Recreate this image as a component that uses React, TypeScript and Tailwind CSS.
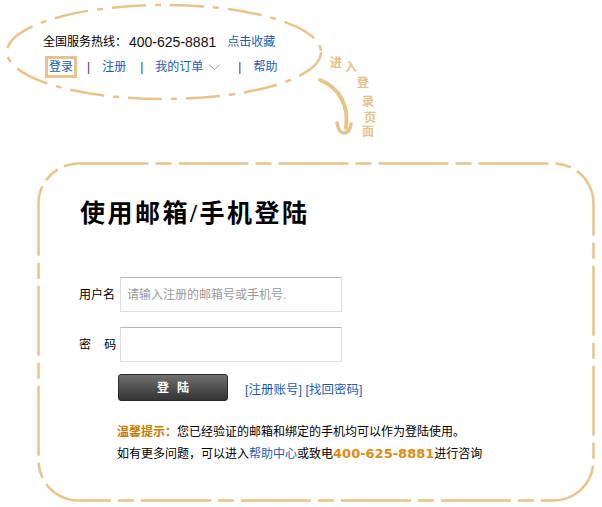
import React from 'react';

const GOLD = '#e8c48c';

function HeaderOval() {
  return (
    <header className="relative h-[110px]">
      {/* dashed oval sketch around the header links */}
      <svg className="absolute left-0 top-0" width="340" height="110" viewBox="0 0 340 110">
        <ellipse
          cx="164"
          cy="52"
          rx="157"
          ry="47"
          fill="none"
          stroke={GOLD}
          strokeWidth="2.5"
          strokeDasharray="34 9 6 9"
        />
      </svg>
      <div className="relative pl-[43px] pt-[33px] text-[12px] leading-[18px]">
        <div className="flex items-center">
          <span className="text-black">全国服务热线：</span>
          <span className="text-[14px] text-[#111] ml-[2px]">400-625-8881</span>
          <a className="ml-[11px] text-[#1b5db5]">点击收藏</a>
        </div>
        <div className="flex items-center mt-[5px] ml-[2px] text-[#1b5db5]">
          <a className="border-[3px] border-[#e8c48c] px-[1px] leading-[16px]">登录</a>
          <span className="ml-[10px] text-[#6a1366]">|</span>
          <a className="ml-[12px]">注册</a>
          <span className="ml-[14px] text-[#1a5a1a]">|</span>
          <a className="ml-[12px]">我的订单</a>
          <svg className="ml-[5px]" width="13" height="8" viewBox="0 0 13 8">
            <path d="M1 1.5 L6.5 6.5 L12 1.5" fill="none" stroke="#aaa" strokeWidth="1" />
          </svg>
          <span className="ml-[17px] text-[#6a1366]">|</span>
          <a className="ml-[12px]">帮助</a>
        </div>
      </div>
      {/* hand-drawn arrow pointing down to the login page */}
      <svg className="absolute left-[300px] top-[50px]" width="90" height="95" viewBox="300 50 90 95">
        <path d="M320 80 C 340 88, 349 106, 346 128" fill="none" stroke={GOLD} strokeWidth="4" strokeLinecap="round" />
        <path d="M337 123 Q 339 134 345 133 Q 350 132 351 124" fill="none" stroke={GOLD} strokeWidth="3.5" strokeLinecap="round" />
      </svg>
      <div className="absolute left-[330px] top-[56px] text-[12px] leading-[14px] font-bold text-[#e8c08a]">
        <span className="absolute left-0 top-0">进</span>
        <span className="absolute left-[15px] top-[5px]">入</span>
        <span className="absolute left-[27px] top-[20px]">登</span>
        <span className="absolute left-[32px] top-[39px]">录</span>
        <span className="absolute left-[34px] top-[55px]">页</span>
        <span className="absolute left-[32px] top-[69px]">面</span>
      </div>
    </header>
  );
}

function LoginBox() {
  return (
    <section className="relative ml-[37px] mt-[52px] w-[558px] h-[340px]">
      <svg className="absolute left-0 top-0" width="558" height="340" viewBox="0 0 558 340">
        <rect
          x="1.5"
          y="1.5"
          width="555"
          height="337"
          rx="40"
          fill="none"
          stroke={GOLD}
          strokeWidth="2.5"
          strokeDasharray="70 7 16 7"
        />
      </svg>
      <div className="relative pl-[43px] pt-[37px]">
        <h1 className="text-[25px] leading-[30px] tracking-[2.5px] font-bold text-black font-['Liberation_Serif','Noto_Sans_CJK_SC',serif]">
          使用邮箱/手机登陆
        </h1>
      </div>
      <div className="relative pl-[42px] mt-[48px] text-[12px]">
        <div className="flex items-center">
          <label className="w-[41px] text-black">用户名</label>
          <input
            className="w-[222px] h-[35px] border border-[#dcdfe8] border-t-[#b5b5b5] px-[6px] text-[12px] outline-none placeholder:text-[#9a9a9a]"
            placeholder="请输入注册的邮箱号或手机号."
          />
        </div>
        <div className="flex items-center mt-[15px]">
          <label className="w-[41px] text-black">密&nbsp;&nbsp;&nbsp;&nbsp;码</label>
          <input
            type="password"
            className="w-[222px] h-[35px] border border-[#dcdfe8] border-t-[#b5b5b5] px-[6px] outline-none"
          />
        </div>
        <div className="flex items-center mt-[12px] ml-[39px]">
          <button className="w-[110px] h-[27px] rounded-[3px] border border-[#2b2b2b] bg-gradient-to-b from-[#707070] to-[#343434] text-white font-bold text-[12px] tracking-[8px] pl-[8px]">
            登陆
          </button>
          <span className="ml-[17px] text-[12.5px] text-[#1b5db5] mt-[5px]">[注册账号] [找回密码]</span>
        </div>
        <div className="ml-[38px] mt-[20px] leading-[22px] text-black">
          <div>
            <span className="font-bold text-[#c97a06]">温馨提示：</span>
            您已经验证的邮箱和绑定的手机均可以作为登陆使用。
          </div>
          <div>
            如有更多问题，可以进入<a className="text-[#1b5db5]">帮助中心</a>或致电
            <span className="font-bold text-[13px] text-[#e08a12] font-['DejaVu_Sans',sans-serif]">400-625-8881</span>进行咨询
          </div>
        </div>
      </div>
    </section>
  );
}

export default function App() {
  return (
    <div className="w-[602px] h-[507px] bg-white overflow-hidden font-['Liberation_Sans','Noto_Sans_CJK_SC',sans-serif]">
      <HeaderOval />
      <LoginBox />
    </div>
  );
}
